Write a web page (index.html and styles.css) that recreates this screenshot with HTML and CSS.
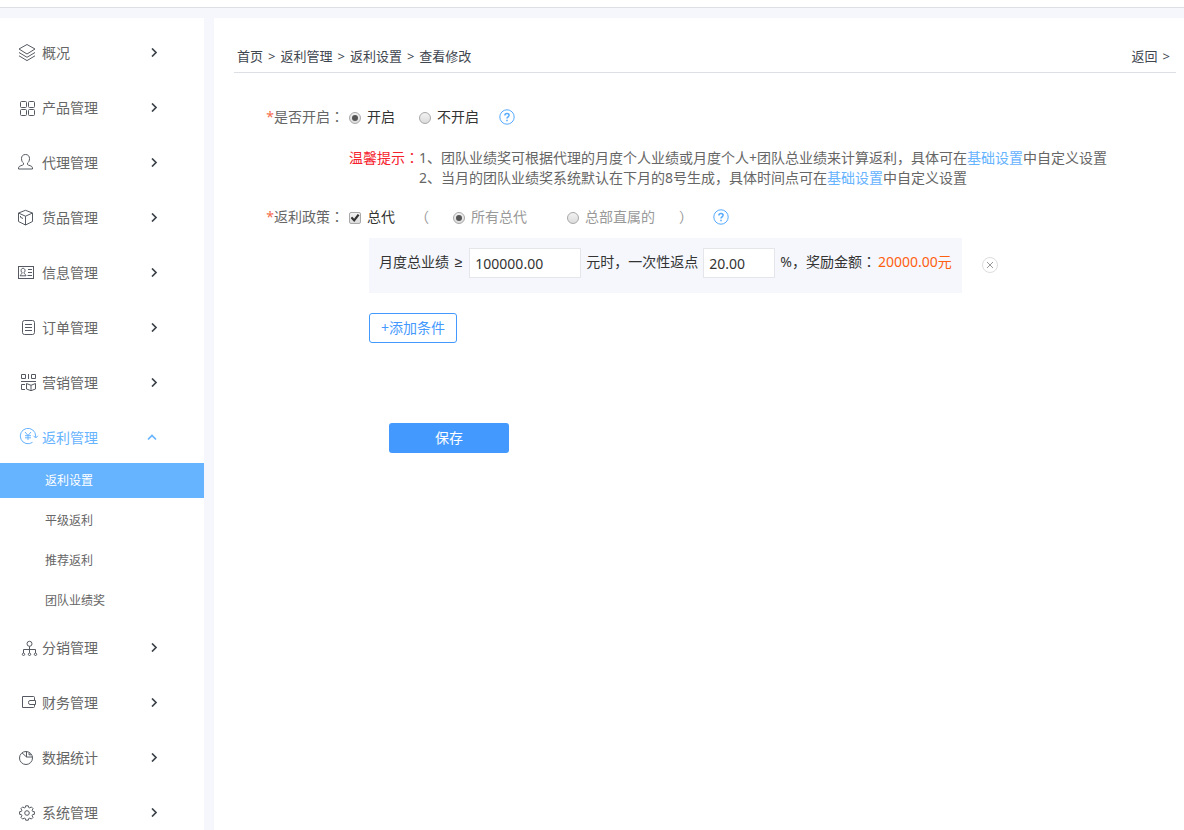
FILE: index.html
```html
<!DOCTYPE html>
<html lang="zh-CN">
<head>
<meta charset="utf-8">
<meta name="viewport" content="width=device-width, initial-scale=1">
<title>返利设置</title>
<link rel="stylesheet" href="styles.css">
</head>
<body>
<header class="topbar"></header>
<div class="layout">
  <nav class="sidebar" aria-label="主菜单">
    <a class="nav-item" href="#">
      <svg class="icon" viewBox="0 0 24 25"><path d="M11 4.5 19 9l-8 5-8-5zM3 12.5l8 4.8 8-4.8M3 15.8l8 4.8 8-4.8"/></svg>
      <span class="nav-text">概况</span>
      <svg class="arrow" viewBox="0 0 10 9"><path d="m3 .5 4 4-4 4"/></svg>
    </a>
    <a class="nav-item" href="#">
      <svg class="icon" viewBox="0 0 24 25"><rect x="4.5" y="6.5" width="6" height="6" rx="1"/><rect x="12.5" y="6.5" width="6" height="6" rx="1"/><rect x="4.5" y="14.5" width="6" height="6" rx="1"/><rect x="12.5" y="14.5" width="6" height="6" rx="1"/></svg>
      <span class="nav-text">产品管理</span>
      <svg class="arrow" viewBox="0 0 10 9"><path d="m3 .5 4 4-4 4"/></svg>
    </a>
    <a class="nav-item" href="#">
      <svg class="icon" viewBox="0 0 24 25"><path d="M9.500 4.500c-2.600 0-4 1.700-4 4 0 2.300.9 3.800 2 4.600v1.400c-.4 1-5 1.100-5 3.300v1.200h14v-1.200c0-2.200-4.600-2.300-5-3.300v-1.400c1.100-.8 2-2.300 2-4.600 0-2.300-1.400-4-4-4z"/></svg>
      <span class="nav-text">代理管理</span>
      <svg class="arrow" viewBox="0 0 10 9"><path d="m3 .5 4 4-4 4"/></svg>
    </a>
    <a class="nav-item" href="#">
      <svg class="icon" viewBox="0 0 24 25"><path d="m9.500 5.300 7 2.700v8.500l-7 3.500-7-3.500V8zM2.500 8l7 3.200 7-3.200M9.500 11.200V20M4.500 11v1.300l2.500 1.200"/></svg>
      <span class="nav-text">货品管理</span>
      <svg class="arrow" viewBox="0 0 10 9"><path d="m3 .5 4 4-4 4"/></svg>
    </a>
    <a class="nav-item" href="#">
      <svg class="icon" viewBox="0 0 24 25"><rect x="2.500" y="6.500" width="15" height="12"/><path d="M12 9.500h4M12 12.500h4M11.500 15.500H16M7 8.300c-1.300 0-1.900 1-1.900 2.200 0 1.100.4 1.800 1.100 2.300-.1 1.400-1.800 1.200-2 3H10c-.2-1.800-1.900-1.600-2.100-3 .7-.5 1.100-1.200 1.100-2.300 0-1.200-.7-2.200-2-2.200z"/></svg>
      <span class="nav-text">信息管理</span>
      <svg class="arrow" viewBox="0 0 10 9"><path d="m3 .5 4 4-4 4"/></svg>
    </a>
    <a class="nav-item" href="#">
      <svg class="icon" viewBox="0 0 24 25"><rect x="6.500" y="5.500" width="12" height="14" rx="2"/><path d="M9 9.500h7M9 12.500h7M9 15.500h7"/></svg>
      <span class="nav-text">订单管理</span>
      <svg class="arrow" viewBox="0 0 10 9"><path d="m3 .5 4 4-4 4"/></svg>
    </a>
    <a class="nav-item" href="#">
      <svg class="icon" viewBox="0 0 24 25"><path d="M5.500 4.500h4v4h-4zM15.500 4.500h4v4h-4zM12.500 4v5M5 11.500h15M9 14.500H5.500v5H9M10.500 13.500l4.500 1.800 4.500-1.800v5.500L15 20.700 10.500 19zM15 15.300v5.400"/></svg>
      <span class="nav-text">营销管理</span>
      <svg class="arrow" viewBox="0 0 10 9"><path d="m3 .5 4 4-4 4"/></svg>
    </a>
    <a class="nav-item nav-item-open" href="#">
      <svg class="icon" viewBox="0 0 24 25"><path d="M16.500 17.300A7.700 7.700 0 1 1 19.700 11v1.500M17.500 10.800l2.200 2.200 2.200-2.200M9 7l3 3.500L15 7M12 10.500V15M9 10.700h6M9 12.800h6"/></svg>
      <span class="nav-text">返利管理</span>
      <svg class="arrow" viewBox="0 0 10 9"><path d="m1 6.500 4-4 4 4"/></svg>
    </a>
    <div class="subnav">
      <a class="sub-item sub-item-active" href="#" aria-current="page">返利设置</a>
      <a class="sub-item" href="#">平级返利</a>
      <a class="sub-item" href="#">推荐返利</a>
      <a class="sub-item" href="#">团队业绩奖</a>
    </div>
    <a class="nav-item" href="#">
      <svg class="icon" viewBox="0 0 24 25"><circle cx="13.500" cy="8.800" r="2.500"/><path d="M13.500 11.300v6.500M7.500 18v-3.500h12V18"/><circle cx="7.500" cy="19.300" r="1.200"/><circle cx="13.500" cy="19.300" r="1.200"/><circle cx="19.500" cy="19.300" r="1.200"/></svg>
      <span class="nav-text">分销管理</span>
      <svg class="arrow" viewBox="0 0 10 9"><path d="m3 .5 4 4-4 4"/></svg>
    </a>
    <a class="nav-item" href="#">
      <svg class="icon" viewBox="0 0 24 25"><path d="M18.500 10.500v-3a1 1 0 0 0-1-1h-11v11h11a1 1 0 0 0 1-1v-2M19.500 10.500H14a1.500 2 0 0 0 0 4h5.500z"/></svg>
      <span class="nav-text">财务管理</span>
      <svg class="arrow" viewBox="0 0 10 9"><path d="m3 .5 4 4-4 4"/></svg>
    </a>
    <a class="nav-item" href="#">
      <svg class="icon" viewBox="0 0 24 25"><circle cx="10" cy="13" r="6.500"/><path d="M10.500 6.500v5.500h6M10.500 12 6 7.800M13 7.500v2.300h2.300"/></svg>
      <span class="nav-text">数据统计</span>
      <svg class="arrow" viewBox="0 0 10 9"><path d="m3 .5 4 4-4 4"/></svg>
    </a>
    <a class="nav-item" href="#">
      <svg class="icon" viewBox="-11 -13 24 25"><circle r="2.300"/><path d="M7.400-1.300V1.300L5.600 1.600 5.100 2.800 6.100 4.300 4.300 6.100 2.800 5.100 1.600 5.600 1.300 7.200H-1.300L-1.600 5.600-2.800 5.100-4.300 6.100-6.100 4.300-5.100 2.800-5.600 1.600-7.400 1.300V-1.300L-5.600-1.600-5.100-2.800-6.100-4.300-4.300-6.100-2.800-5.100-1.600-5.600-1.300-7.200H1.300L1.600-5.600 2.800-5.100 4.300-6.100 6.100-4.300 5.100-2.800 5.600-1.600z"/></svg>
      <span class="nav-text">系统管理</span>
      <svg class="arrow" viewBox="0 0 10 9"><path d="m3 .5 4 4-4 4"/></svg>
    </a>
  </nav>

  <main class="content">
    <div class="crumb-bar">
      <nav class="crumbs" aria-label="面包屑">
        <a href="#">首页</a><span>&gt;</span><a href="#">返利管理</a><span>&gt;</span><a href="#">返利设置</a><span>&gt;</span><span>查看修改</span>
      </nav>
      <a class="crumbs" href="#"><span>返回</span><span>&gt;</span></a>
    </div>

    <form class="form">
      <div class="row">
        <span class="row-label"><span class="star">*</span>是否开启<span class="colon" lang="zh-TW">：</span></span>
        <div class="choices">
          <label class="choice"><input type="radio" name="enabled" checked>开启</label>
          <label class="choice"><input type="radio" name="enabled">不开启</label>
        </div>
        <button class="help" type="button" aria-label="帮助"><svg viewBox="0 0 16 16"><circle cx="8" cy="8" r="7.200"/><path class="mark" d="M5.900 6.500C5.900 5.200 6.800 4.500 8 4.500s2.100.7 2.100 1.800c0 1.500-2.100 1.600-2.100 3.200M8 10.800v1.400"/></svg></button>
      </div>

      <div class="tips">
        <span class="tips-title">温馨提示<span class="colon" lang="zh-TW">：</span></span>
        <div class="tips-text">
          <p>1、团队业绩奖可根据代理的月度个人业绩或月度个人+团队总业绩来计算返利，具体可在<a href="#">基础设置</a>中自定义设置</p>
          <p>2、当月的团队业绩奖系统默认在下月的8号生成，具体时间点可在<a href="#">基础设置</a>中自定义设置</p>
        </div>
      </div>

      <div class="row">
        <span class="row-label"><span class="star">*</span>返利政策<span class="colon" lang="zh-TW">：</span></span>
        <label class="choice"><input type="checkbox" checked>总代</label>
        <div class="scope">
          <span>（</span>
          <div class="scope-choices">
            <label class="choice"><input type="radio" name="scope" checked>所有总代</label>
            <label class="choice"><input type="radio" name="scope">总部直属的</label>
          </div>
          <span>）</span>
        </div>
        <button class="help" type="button" aria-label="帮助"><svg viewBox="0 0 16 16"><circle cx="8" cy="8" r="7.200"/><path class="mark" d="M5.900 6.500C5.900 5.200 6.800 4.500 8 4.500s2.100.7 2.100 1.800c0 1.500-2.100 1.600-2.100 3.200M8 10.800v1.400"/></svg></button>
      </div>

      <div class="rules">
        <div class="rule-line">
          <div class="rule">
            <label for="amount">月度总业绩 <span class="sign">≥</span></label>
            <input class="field field-wide" id="amount" type="text" value="100000.00">
            <label for="rate">元时，一次性返点</label>
            <input class="field" id="rate" type="text" value="20.00">
            <span>%，奖励金额<span class="colon" lang="zh-TW">：</span><output class="money" for="amount rate">20000.00元</output></span>
          </div>
          <button class="remove" type="button" aria-label="删除条件"><svg viewBox="0 0 16 16"><circle cx="8" cy="8" r="7.500"/><path d="m5 5 6 6M11 5l-6 6"/></svg></button>
        </div>
        <button class="add" type="button">+添加条件</button>
      </div>
      <button class="save" type="submit">保存</button>
    </form>
  </main>
</div>
</body>
</html>
```
FILE: styles.css
```css
* {
  box-sizing: border-box;
}

body {
  margin: 0;
  height: 100vh;
  display: flex;
  flex-direction: column;
  background: #f5f7fc;
  color: #666;
  font: 14px/20px "Noto Sans", "Noto Sans CJK SC", sans-serif;
}

a {
  color: inherit;
  text-decoration: none;
}

p {
  margin: 0;
}

input,
button {
  margin: 0;
  padding: 0;
  font: inherit;
}

button {
  border: 0;
  background: none;
  cursor: pointer;
}

svg {
  display: block;
  fill: none;
  stroke: currentColor;
}

.topbar {
  flex: none;
  height: 8px;
  background: #fff;
  border-bottom: 1px solid #dcdfe3;
}

.layout {
  flex: 1;
  min-height: 0;
  display: flex;
  gap: 10px;
  padding-top: 10px;
}

/* Sidebar */

.sidebar {
  flex: none;
  width: 204px;
  display: flex;
  flex-direction: column;
  gap: 4px;
  padding-top: 9px;
  background: #fff;
  overflow-y: auto;
  scrollbar-width: none;
}

.nav-item {
  flex: none;
  height: 51px;
  display: flex;
  align-items: center;
  padding: 0 45px 0 16px;
}

.nav-text {
  flex: 1;
  padding-left: 2px;
}

.icon {
  width: 24px;
  height: 25px;
  color: #555a62;
}

.arrow {
  width: 10px;
  height: 9px;
  color: #3c4249;
  stroke-width: 1.7;
}

.nav-item-open,
.nav-item-open .icon,
.nav-item-open .arrow {
  color: #66b3ff;
}

.nav-item-open .arrow {
  margin-right: 2px;
}

.subnav {
  flex: none;
  display: flex;
  flex-direction: column;
  gap: 5px;
  margin-top: -4px;
  font-size: 12px;
}

.sub-item {
  padding-left: 45px;
  line-height: 35px;
}

.sub-item-active {
  background: #66b3ff;
  color: #fff;
}

/* Content */

.content {
  flex: 1;
  min-width: 0;
  padding: 23px 8px 23px 20px;
  background: #fff;
  overflow-y: auto;
}

.crumb-bar {
  display: flex;
  justify-content: space-between;
  padding: 5px 6px 6px 3px;
  border-bottom: 1px solid #dcdfe3;
  color: #40464f;
  font-size: 13px;
}

.crumbs {
  display: flex;
  gap: 5px;
}

.form {
  padding: 29px 0 0 30px;
}

.row {
  display: flex;
  align-items: center;
  height: 30px;
}

.row-label {
  width: 80px;
  margin-right: 5px;
  text-align: right;
  white-space: nowrap;
}

.star {
  color: #f56c4c;
}

.colon {
  font-family: "Noto Sans CJK TC", sans-serif;
  line-height: 1;
}

.choices {
  display: flex;
  gap: 24px;
}

.choice {
  display: flex;
  align-items: center;
  gap: 6px;
  color: #333;
}

.choice input {
  appearance: none;
  width: 12px;
  height: 12px;
  margin-top: 2px;
  border: 1px solid #a8a8a8;
  background: linear-gradient(#f2f2f2, #dcdcdc);
  display: grid;
  place-items: center;
}

.choice input[type="radio"] {
  border-radius: 50%;
}

.choice input[type="radio"]:checked::before {
  content: "";
  width: 6px;
  height: 6px;
  border-radius: 50%;
  background: #555;
}

.choice input[type="checkbox"] {
  border-radius: 2px;
}

.choice input[type="checkbox"]:checked::before {
  content: "";
  width: 9px;
  height: 8px;
  background: #333;
  clip-path: polygon(0 50%, 20% 35%, 40% 60%, 80% 0, 100% 15%, 42% 100%);
}

.help {
  width: 16px;
  height: 16px;
  margin-left: 20px;
  color: #55aaff;
}

.mark {
  stroke-width: 1.5;
}

.tips {
  display: flex;
  margin: 16px 0 14px 85px;
}

.tips-title {
  flex: none;
  color: #f5222d;
}

.tips-text a {
  color: #66b3ff;
}

.scope {
  display: flex;
  gap: 24px;
  margin-left: 20px;
  color: #999;
}

.scope .choice {
  color: #999;
}

.scope-choices {
  display: flex;
  gap: 40px;
}

.rules {
  display: flex;
  flex-direction: column;
  align-items: flex-start;
  gap: 20px;
  padding: 6px 0 0 105px;
}

.rule-line {
  display: flex;
  align-items: flex-start;
  gap: 20px;
}

.rule {
  display: flex;
  align-items: flex-start;
  gap: 5px;
  padding: 10px 10px 15px;
  background: #f5f7fc;
  color: #333;
  line-height: 28px;
}

.sign {
  padding: 0 2px;
  font-family: "Liberation Sans", sans-serif;
  line-height: 1;
}

.field {
  width: 72px;
  height: 30px;
  padding: 0 5px;
  border: 1px solid #e4e6ea;
  background: #fff;
  color: #333;
}

.field-wide {
  width: 112px;
}

.money {
  margin-left: 2px;
  color: #ff6010;
}

.remove {
  width: 16px;
  height: 16px;
  margin-top: 19px;
  color: #999;
}

.remove circle {
  stroke: #ddd;
}

.add {
  width: 88px;
  height: 30px;
  border: 1px solid #4499ff;
  border-radius: 3px;
  color: #4499ff;
}

.save {
  width: 120px;
  height: 30px;
  margin: 80px 0 0 125px;
  border-radius: 3px;
  background: #4499ff;
  color: #fff;
}
```
